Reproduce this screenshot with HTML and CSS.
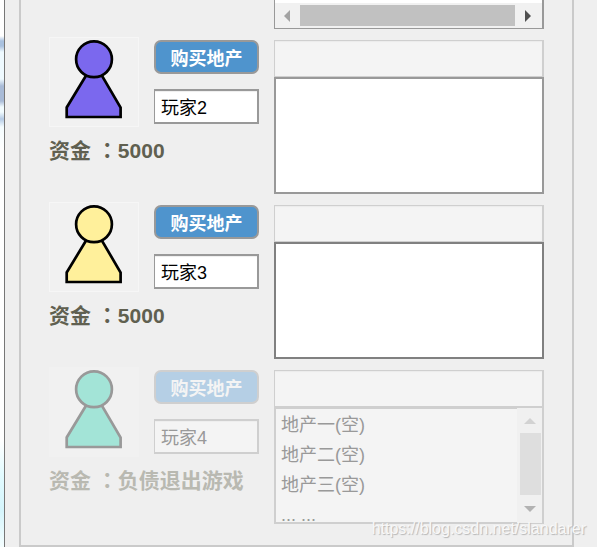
FILE: index.html
```html
<!DOCTYPE html>
<html lang="zh-CN">
<head>
<meta charset="utf-8">
<title>玩家</title>
<link rel="stylesheet" href="styles.css">
</head>
<body>
<svg class="symbols" aria-hidden="true">
  <symbol id="pawn" viewBox="0 0 88 88">
    <path d="M37 36 L16.700 69.500 V79 H70.600 V69.500 L51 36 Z"/>
    <circle cx="44" cy="21.300" r="17.900"/>
  </symbol>
</svg>
<div class="backdrop"></div>
<main class="window">
  <section class="panel">
    <div class="previous">
      <div class="hbar">
        <svg class="arrow" viewBox="0 0 25 25"><path fill="#a3a3a3" d="M15 7 V19 L9 13 Z"/></svg>
        <div class="hthumb"></div>
        <svg class="arrow" viewBox="0 0 25 25"><path fill="#505050" d="M10 7 V19 L16 13 Z"/></svg>
      </div>
    </div>

    <article class="player">
      <div class="profile">
        <svg class="avatar violet"><use href="#pawn"/></svg>
        <div class="controls">
          <button class="buy" type="button">购买地产</button>
          <input class="name" type="text" value="玩家2" aria-label="玩家">
        </div>
        <p class="funds">资金 <span class="colon" lang="zh-TW">：</span>5000</p>
      </div>
      <div class="estate">
        <input class="entry" type="text" aria-label="地产" disabled>
        <textarea class="list" aria-label="地产"></textarea>
      </div>
    </article>

    <article class="player">
      <div class="profile">
        <svg class="avatar yellow"><use href="#pawn"/></svg>
        <div class="controls">
          <button class="buy" type="button">购买地产</button>
          <input class="name" type="text" value="玩家3" aria-label="玩家">
        </div>
        <p class="funds">资金 <span class="colon" lang="zh-TW">：</span>5000</p>
      </div>
      <div class="estate">
        <input class="entry" type="text" aria-label="地产" disabled>
        <textarea class="list active" aria-label="地产"></textarea>
      </div>
    </article>

    <article class="player out">
      <div class="profile">
        <svg class="avatar mint"><use href="#pawn"/></svg>
        <div class="controls">
          <button class="buy" type="button" disabled>购买地产</button>
          <input class="name" type="text" value="玩家4" aria-label="玩家" disabled>
        </div>
        <p class="funds">资金 <span class="colon" lang="zh-TW">：</span>负债退出游戏</p>
      </div>
      <div class="estate">
        <input class="entry" type="text" aria-label="地产" disabled>
        <textarea class="list" aria-label="地产" disabled>地产一(空)
地产二(空)
地产三(空)
... ...</textarea>
        <div class="vbar">
          <svg class="arrow" viewBox="0 0 25 25"><path fill="#d2d2d2" d="M7 16 H19 L13 10 Z"/></svg>
          <div class="vthumb"></div>
          <svg class="arrow" viewBox="0 0 25 25"><path fill="#b2b2b2" d="M7 11 H19 L13 17 Z"/></svg>
        </div>
      </div>
    </article>
  </section>
  <span class="credit">https://blog.csdn.net/slandarer</span>
</main>
</body>
</html>
```

FILE: styles.css
```css
* {
  box-sizing: border-box;
}

body {
  margin: 0;
  display: flex;
  background: #efefef;
  font-family: "Liberation Sans", "Noto Sans CJK SC", sans-serif;
  font-size: 18px;
}

.symbols {
  position: absolute;
  width: 0;
  height: 0;
}

.backdrop {
  width: 4px;
  background: linear-gradient(#fff 36px, #a9c1df 41px, #a9c1df 46px, #effaff 52px, #effaff 79px, #a9bbd7 86px, #a9bbd7 101px, #f2fcff 107px, #f2fcff 112px, #b4cae5 119px, #f5fdff 127px, #fff 150px, #fff 440px, #e2fbff 475px, #d5f5fc 510px, #f5feff 547px);
}

.window {
  position: relative;
  flex: 1;
  min-width: 0;
  padding: 0 23px 0 14px;
  border-left: 1px solid #777;
}

.panel {
  display: flex;
  flex-direction: column;
  gap: 8px;
  padding: 0 28px 21px;
  border: 2px solid #cacaca;
  border-top: 0;
}

.previous {
  margin-left: 225px;
  padding-top: 3px;
  background: #fff;
  border: 1px solid #999;
  border-top: 0;
  border-right-width: 2px;
}

.hbar {
  display: flex;
  height: 25px;
  padding-right: 2px;
  background: #f1f1f1;
}

.hthumb {
  flex: 1;
  margin: 2px 0;
  background: #c1c1c1;
}

.arrow {
  flex: none;
  width: 25px;
  height: 25px;
}

.player {
  display: grid;
  grid-template-columns: 210px 1fr;
  column-gap: 15px;
}

.profile {
  display: grid;
  grid-template-columns: 90px 105px;
  column-gap: 15px;
  align-content: start;
}

.avatar {
  width: 90px;
  height: 90px;
  background: #f1f1f1;
  border: 1px solid #f6f6f6;
  stroke: #000;
  stroke-width: 2.7;
}

.violet {
  fill: #7b68ee;
}

.yellow {
  fill: #fff09b;
}

.mint {
  fill: #a3e4d7;
  stroke: #999;
  border-color: #f1f1f1;
}

.controls {
  display: flex;
  flex-direction: column;
  gap: 15px;
  padding-top: 3px;
}

.buy,
.name,
.entry,
.list {
  display: block;
  width: 100%;
  margin: 0;
  border-radius: 0;
  font: inherit;
}

.buy {
  height: 34px;
  padding: 0;
  color: #fff;
  background: #4f94cd;
  border: 2px solid #999;
  border-radius: 7px;
  font-weight: bold;
}

.name {
  height: 35px;
  padding: 0 6px 2px;
  color: #000;
  background: #fff;
  border: 2px solid #999;
  border-left-width: 1px;
  box-shadow: inset 0 1px 1px #eee;
}

.funds {
  grid-column: 1 / -1;
  margin: 6px 0 0;
  color: #606050;
  font-size: 21px;
  font-weight: bold;
  line-height: 32px;
  white-space: nowrap;
}

.colon {
  font-family: "Noto Sans CJK TC", sans-serif;
}

.estate {
  position: relative;
  padding-top: 3px;
}

.entry {
  height: 37px;
  padding: 0 6px;
  background: #f4f4f4;
  border: 1px solid #cfcfcf;
  border-right-width: 2px;
  box-shadow: inset 0 1px 1px #ececec;
}

.list {
  height: 117px;
  padding: 1px 5px;
  background: #fff;
  border: 2px solid #999;
  line-height: 30px;
  outline: 0;
  overflow: hidden;
  resize: none;
}

.active {
  border-color: #808080;
}

.out .buy {
  color: #f4f4f4;
  background: #b5cfe5;
  border-color: #cfcfcf;
}

.out .name,
.out .list {
  color: #999;
  background: #f4f4f4;
  border-color: #cfcfcf;
}

.out .funds {
  color: #b9b9b1;
}

.vbar {
  position: absolute;
  right: 2px;
  bottom: 1px;
  display: flex;
  flex-direction: column;
  width: 25px;
  height: 115px;
  background: #f0f0f0;
}

.vthumb {
  height: 62px;
  margin: 0 1px 0 3px;
  background: #dedede;
}

.credit {
  position: absolute;
  right: 11px;
  bottom: 9px;
  color: #f8f8f8;
  font-size: 16px;
  line-height: 18px;
  text-shadow: 1px 1px 1px #b5b5b5;
}
```
